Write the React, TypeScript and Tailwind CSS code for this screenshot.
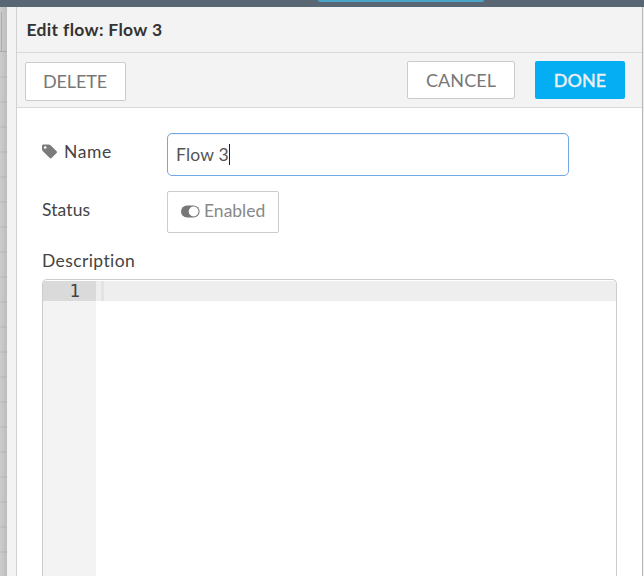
import React from 'react';

function TagIcon() {
  return (
    <svg className="h-4 w-4 shrink-0 text-[#7b7b7b]" viewBox="0 0 16 16" fill="currentColor">
      <path
        fillRule="evenodd"
        d="M0 1.7C0 1 .6.4 1.300.4h5.200c.7 0 1.600.4 2.100.9l6 6c.5.5.5 1.300 0 1.800l-5 5c-.5.5-1.300.5-1.800 0l-6.900-6.900C.4 6.700 0 5.800 0 5.100zM3.200 2.200a1.300 1.300 0 1 0 0 2.600 1.300 1.300 0 0 0 0-2.600z"
      />
    </svg>
  );
}

function ToggleIcon() {
  return (
    <svg className="h-[13px] w-[19px] shrink-0 text-[#777]" viewBox="0 0 19 13">
      <rect x="0" y="0.5" width="18.600" height="12" rx="6" fill="currentColor" />
      <circle cx="12.600" cy="6.500" r="4.900" fill="white" />
    </svg>
  );
}

function Toolbar() {
  return (
    <div className="flex h-[55px] shrink-0 items-start border-b border-[#d9d9d9] pl-2 pr-[17px] pt-2 text-[18px] text-[#777]">
      <button className="mt-px h-[39px] w-[101px] rounded-[2px] border border-[#ccc] bg-white pr-px tracking-[-0.1px]">
        DELETE
      </button>
      <button className="ml-auto h-[38px] w-[108px] rounded-[2px] border border-[#ccc] bg-white pt-px tracking-[0.05px]">
        CANCEL
      </button>
      <button className="ml-5 h-[38px] w-[90px] rounded-[2px] bg-[#05aef3] pt-px font-medium text-[#eee] [-webkit-text-stroke:0.3px_#eee]">
        DONE
      </button>
    </div>
  );
}

function Editor() {
  return (
    <div className="mt-[7px] flex min-h-0 w-[575px] flex-1 overflow-hidden rounded-t-[5px] border border-b-0 border-[#ccc] bg-white pt-px">
      <div className="w-[53px] shrink-0 bg-[#f3f3f3]">
        <div className="h-5 bg-[#dadada] pr-4 text-right font-['DejaVu_Sans_Mono',monospace] text-[17.500px] leading-5 text-[#444]">
          1
        </div>
      </div>
      <div className="flex h-5 flex-1 bg-[#eee] pl-[5px]">
        <div className="w-[3px] bg-[#e3e3e3]" />
      </div>
    </div>
  );
}

export default function App() {
  return (
    <div className="flex h-[576px] w-[644px] flex-col overflow-hidden bg-white font-['Lato',sans-serif] text-[#444]">
      <div className="h-[7px] shrink-0 bg-[#596673]">
        <div className="ml-[318px] h-0.5 w-[166px] rounded-b-[2px] bg-[#4ba5c9]" />
      </div>
      <div className="flex min-h-0 flex-1">
        <div className="flex w-[7px] shrink-0 flex-col bg-linear-to-r from-[#cdcdcd] to-[#bdbdbd]">
          <div className="h-[45px] shrink-0 border-b border-[#a9a9a9] pt-[5px]">
            <div className="h-full w-0.5 border-r border-[#a9a9a9]" />
          </div>
          <div className="h-px shrink-0" />
          {Array.from({ length: 21 }, (_, i) => (
            <div key={i} className="h-[25px] shrink-0 border-b-2 border-black/4" />
          ))}
        </div>
        <div className="w-[9px] shrink-0 bg-[#f3f3f3]" />
        <main className="flex w-[627px] flex-col border-x border-l-[#d2d2d2] border-r-[#b8b8b8]">
          <div className="flex flex-col bg-[#f3f3f3]">
            <h1 className="h-[46px] border-b border-[#d9d9d9] pl-[9.500px] text-[17.500px] font-bold leading-[46px] tracking-[0.33px] text-[#333]">
              Edit flow: Flow 3
            </h1>
            <Toolbar />
          </div>
          <div className="flex min-h-0 flex-1 flex-col pl-[25px] pt-[25px] text-[17.500px]">
            <div className="flex h-[43px]">
              <div className="flex h-[38px] w-[125px] items-center gap-[6px] tracking-[0.6px]">
                <TagIcon />
                <span>Name</span>
              </div>
              <div className="flex w-[402px] items-center rounded-[5px] border border-[#70a7e4] pl-2 text-[#555] shadow-[inset_0_1px_1px_rgba(0,0,0,0.06)]">
                <span className="pt-0.5 tracking-[0.2px]">Flow 3</span>
                <span className="h-[21px] w-px bg-[#222]" />
              </div>
            </div>
            <div className="mt-[15px] flex h-[42px]">
              <div className="w-[125px] leading-[37px] tracking-[0.1px]">Status</div>
              <button className="flex w-[112px] items-center gap-1 rounded-[2px] border border-[#ccc] pb-px pl-[13px] text-[#888]">
                <ToggleIcon />
                <span>Enabled</span>
              </button>
            </div>
            <div className="mt-4 h-[23px] leading-[23px] tracking-[0.4px]">Description</div>
            <Editor />
          </div>
        </main>
        <div className="w-px bg-[#eee]" />
      </div>
    </div>
  );
}
